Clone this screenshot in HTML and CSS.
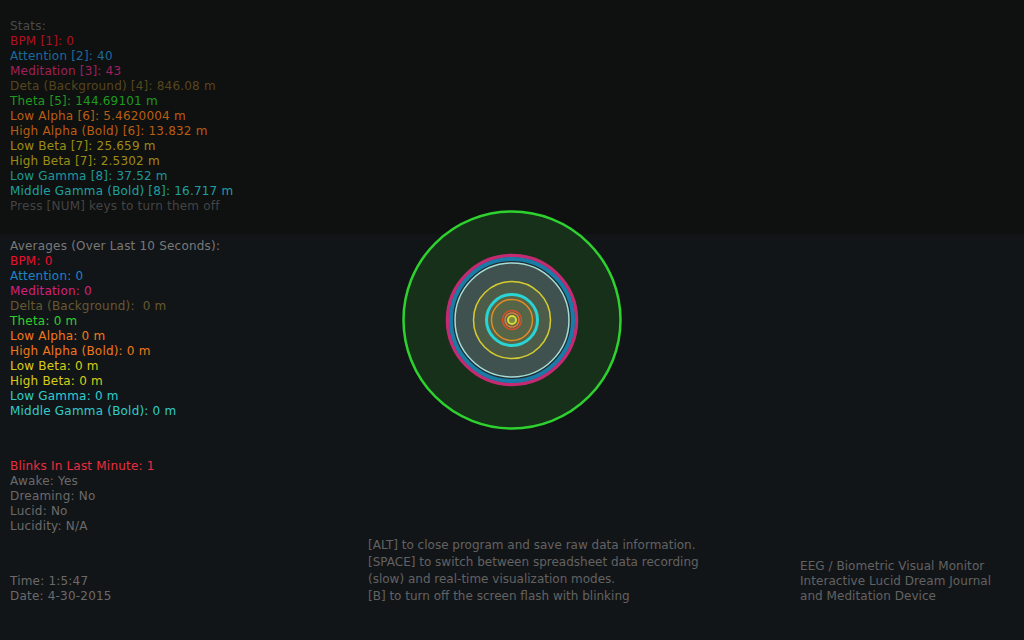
FILE: index.html
```html
<!DOCTYPE html>
<html>
<head>
<meta charset="utf-8">
<link rel="stylesheet" href="styles.css">
</head>
<body>
<div class="screen">
  <section class="band">
    <div class="lines">
      <div class="c-head">Stats:</div>
      <div class="s-bpm">BPM [1]: 0</div>
      <div class="s-att">Attention [2]: 40</div>
      <div class="s-med">Meditation [3]: 43</div>
      <div class="s-del">Deta (Background) [4]: 846.08 m</div>
      <div class="s-the">Theta [5]: 144.69101 m</div>
      <div class="s-alp">Low Alpha [6]: 5.4620004 m</div>
      <div class="s-alp">High Alpha (Bold) [6]: 13.832 m</div>
      <div class="s-bet">Low Beta [7]: 25.659 m</div>
      <div class="s-bet">High Beta [7]: 2.5302 m</div>
      <div class="s-gam">Low Gamma [8]: 37.52 m</div>
      <div class="s-gam2">Middle Gamma (Bold) [8]: 16.717 m</div>
      <div class="c-dim">Press [NUM] keys to turn them off</div>
    </div>
  </section>
  <section class="lower">
    <div class="left">
      <div class="lines">
        <div class="c-head2">Averages (Over Last 10 Seconds):</div>
        <div class="a-bpm">BPM: 0</div>
        <div class="a-att">Attention: 0</div>
        <div class="a-med">Meditation: 0</div>
        <div class="a-del">Delta (Background):&nbsp; 0 m</div>
        <div class="a-the">Theta: 0 m</div>
        <div class="a-alp">Low Alpha: 0 m</div>
        <div class="a-alp">High Alpha (Bold): 0 m</div>
        <div class="a-bet">Low Beta: 0 m</div>
        <div class="a-bet">High Beta: 0 m</div>
        <div class="a-gam">Low Gamma: 0 m</div>
        <div class="a-gam">Middle Gamma (Bold): 0 m</div>
      </div>
      <div class="lines group">
        <div class="a-blink">Blinks In Last Minute: 1</div>
        <div class="c-grey">Awake: Yes</div>
        <div class="c-grey">Dreaming: No</div>
        <div class="c-grey">Lucid: No</div>
        <div class="c-grey">Lucidity: N/A</div>
      </div>
      <div class="lines group">
        <div class="c-grey">Time: 1:5:47</div>
        <div class="c-grey">Date: 4-30-2015</div>
      </div>
    </div>
    <div class="help">
      <div>[ALT] to close program and save raw data information.</div>
      <div>[SPACE] to switch between spreadsheet data recording</div>
      <div>(slow) and real-time visualization modes.</div>
      <div>[B] to turn off the screen flash with blinking</div>
    </div>
    <div class="credits">
      <div>EEG / Biometric Visual Monitor</div>
      <div>Interactive Lucid Dream Journal</div>
      <div>and Meditation Device</div>
    </div>
  </section>
  <svg class="rings" width="240" height="240" viewBox="0 0 240 240">
    <circle cx="120" cy="120" r="108.5" fill="#16301a" stroke="#2ed22e" stroke-width="2.5"/>
    <circle cx="120" cy="120" r="64.5" fill="#1d2d2e" stroke="#c42a72" stroke-width="3.5"/>
    <circle cx="120" cy="120" r="61" fill="none" stroke="#1a7ca6" stroke-width="4"/>
    <circle cx="120" cy="120" r="57" fill="#3f524f" stroke="#a8dcd8" stroke-width="1.5"/>
    <circle cx="120" cy="120" r="38.5" fill="#4c5c48" stroke="#d8cc30" stroke-width="1.5"/>
    <circle cx="120" cy="120" r="25.5" fill="#566448" stroke="#2ad4d4" stroke-width="3"/>
    <circle cx="120" cy="120" r="20.5" fill="none" stroke="#e08c24" stroke-width="1.5"/>
    <circle cx="120" cy="120" r="9.5" fill="none" stroke="#d8502c" stroke-width="1.5"/>
    <circle cx="120" cy="120" r="7" fill="none" stroke="#e07a3a" stroke-width="1.5"/>
    <circle cx="120" cy="120" r="4" fill="#7a8a40" stroke="#d8d838" stroke-width="2"/>
  </svg>
</div>
</body>
</html>
```
FILE: styles.css
```css
html, body {
  margin: 0;
  padding: 0;
  background: #121518;
}
.screen {
  position: relative;
  width: 1024px;
  height: 640px;
  overflow: hidden;
  font-family: "DejaVu Sans", Verdana, sans-serif;
  font-size: 12px;
  line-height: 15px;
  color: #6a6a6a;
  display: flex;
  flex-direction: column;
}
.band {
  height: 234px;
  box-sizing: border-box;
  background: #0f1010;
  padding: 19px 10px 0;
  letter-spacing: 0.2px;
}
.lower {
  flex: 1;
  display: flex;
  align-items: flex-end;
  padding: 0 0 36px 10px;
}
.left {
  align-self: stretch;
  width: 358px;
  padding-top: 5px;
  display: flex;
  flex-direction: column;
  letter-spacing: 0.2px;
}
.group { margin-top: 40px; }
.help {
  width: 432px;
  line-height: 17px;
  margin-bottom: -1px;
  color: #626262;
}
.credits {
  color: #626262;
  letter-spacing: 0.05px;
}
.rings {
  position: absolute;
  left: 392px;
  top: 200px;
}
.c-head { color: #4a4a4a; }
.c-dim { color: #444444; }
.c-head2 { color: #787878; }
.c-grey { color: #6a6a6a; }
.s-bpm { color: #b01022; }
.s-att { color: #1a6a9c; }
.s-med { color: #a0205e; }
.s-del { color: #56461e; }
.s-the { color: #1f9a1f; }
.s-alp { color: #b85e12; }
.s-bet { color: #9c8c14; }
.s-gam { color: #1e9898; }
.s-gam2 { color: #1ea0a0; }
.a-bpm { color: #e8102e; }
.a-att { color: #1c84c4; }
.a-med { color: #d42080; }
.a-del { color: #665830; }
.a-the { color: #2ed02e; }
.a-alp { color: #f07818; }
.a-bet { color: #d8cc18; }
.a-gam { color: #30cccc; }
.a-blink { color: #e82e40; }
```
